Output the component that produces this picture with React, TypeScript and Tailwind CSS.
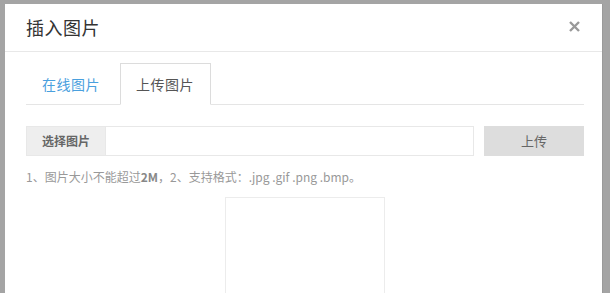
const font = { fontFamily: '"Noto Sans CJK SC", "Liberation Sans", sans-serif' };

export default function App() {
  return (
    <div className="h-[293px] w-[610px] overflow-hidden bg-[#a4a4a4] pt-[4px] pl-[5px]" style={font}>
      <div className="h-[400px] w-[598px] bg-white border-r border-[#9a9a9a]">
        <div className="flex h-[48px] items-center justify-between border-b border-[#e8e8e8] pl-[21px] pr-[22px]">
          <h3 className="text-[18px] leading-none text-[#333] pb-[2px] tracking-[0.5px]">插入图片</h3>
          <svg width="11" height="11" viewBox="0 0 11 11" className="mb-[2px]">
            <path d="M1 1L10 10M10 1L1 10" stroke="#999" strokeWidth="2.4" />
          </svg>
        </div>
        <div className="pl-[21px] pr-[18px] pt-[11px]">
          <div className="flex border-b border-[#e5e5e5]">
            <div className="-mb-px mr-[2px] w-[92px] border border-transparent pl-[15px] py-[10px] text-[14px] leading-[20px] tracking-[0.5px] text-[#4aa0de]">
              在线图片
            </div>
            <div className="-mb-px w-[91px] border border-[#dcdcdc] border-b-white bg-white pl-[15px] py-[10px] text-[14px] leading-[20px] tracking-[0.5px] text-[#555]">
              上传图片
            </div>
          </div>
          <div className="mt-[21px] flex items-stretch">
            <div className="flex flex-1">
              <div className="flex w-[79px] items-center justify-center border border-r-0 border-[#e8e8e8] bg-[#eeeeee] text-[12px] font-bold text-[#666]">
                选择图片
              </div>
              <div className="h-[30px] flex-1 border border-[#e8e8e8] bg-white" />
            </div>
            <button className="ml-[10px] flex h-[30px] w-[100px] items-center justify-center bg-[#dddddd] text-[13px] text-[#666]">
              上传
            </button>
          </div>
          <p className="mt-[12px] text-[12px] leading-[18px] text-[#999]">
            1、图片大小不能超过<b className="text-[#888]">2M</b>，2、支持格式：.jpg .gif .png .bmp。
          </p>
          <div className="mt-[11px] ml-[199px] h-[120px] w-[160px] border border-[#ececec]" />
        </div>
      </div>
    </div>
  );
}
